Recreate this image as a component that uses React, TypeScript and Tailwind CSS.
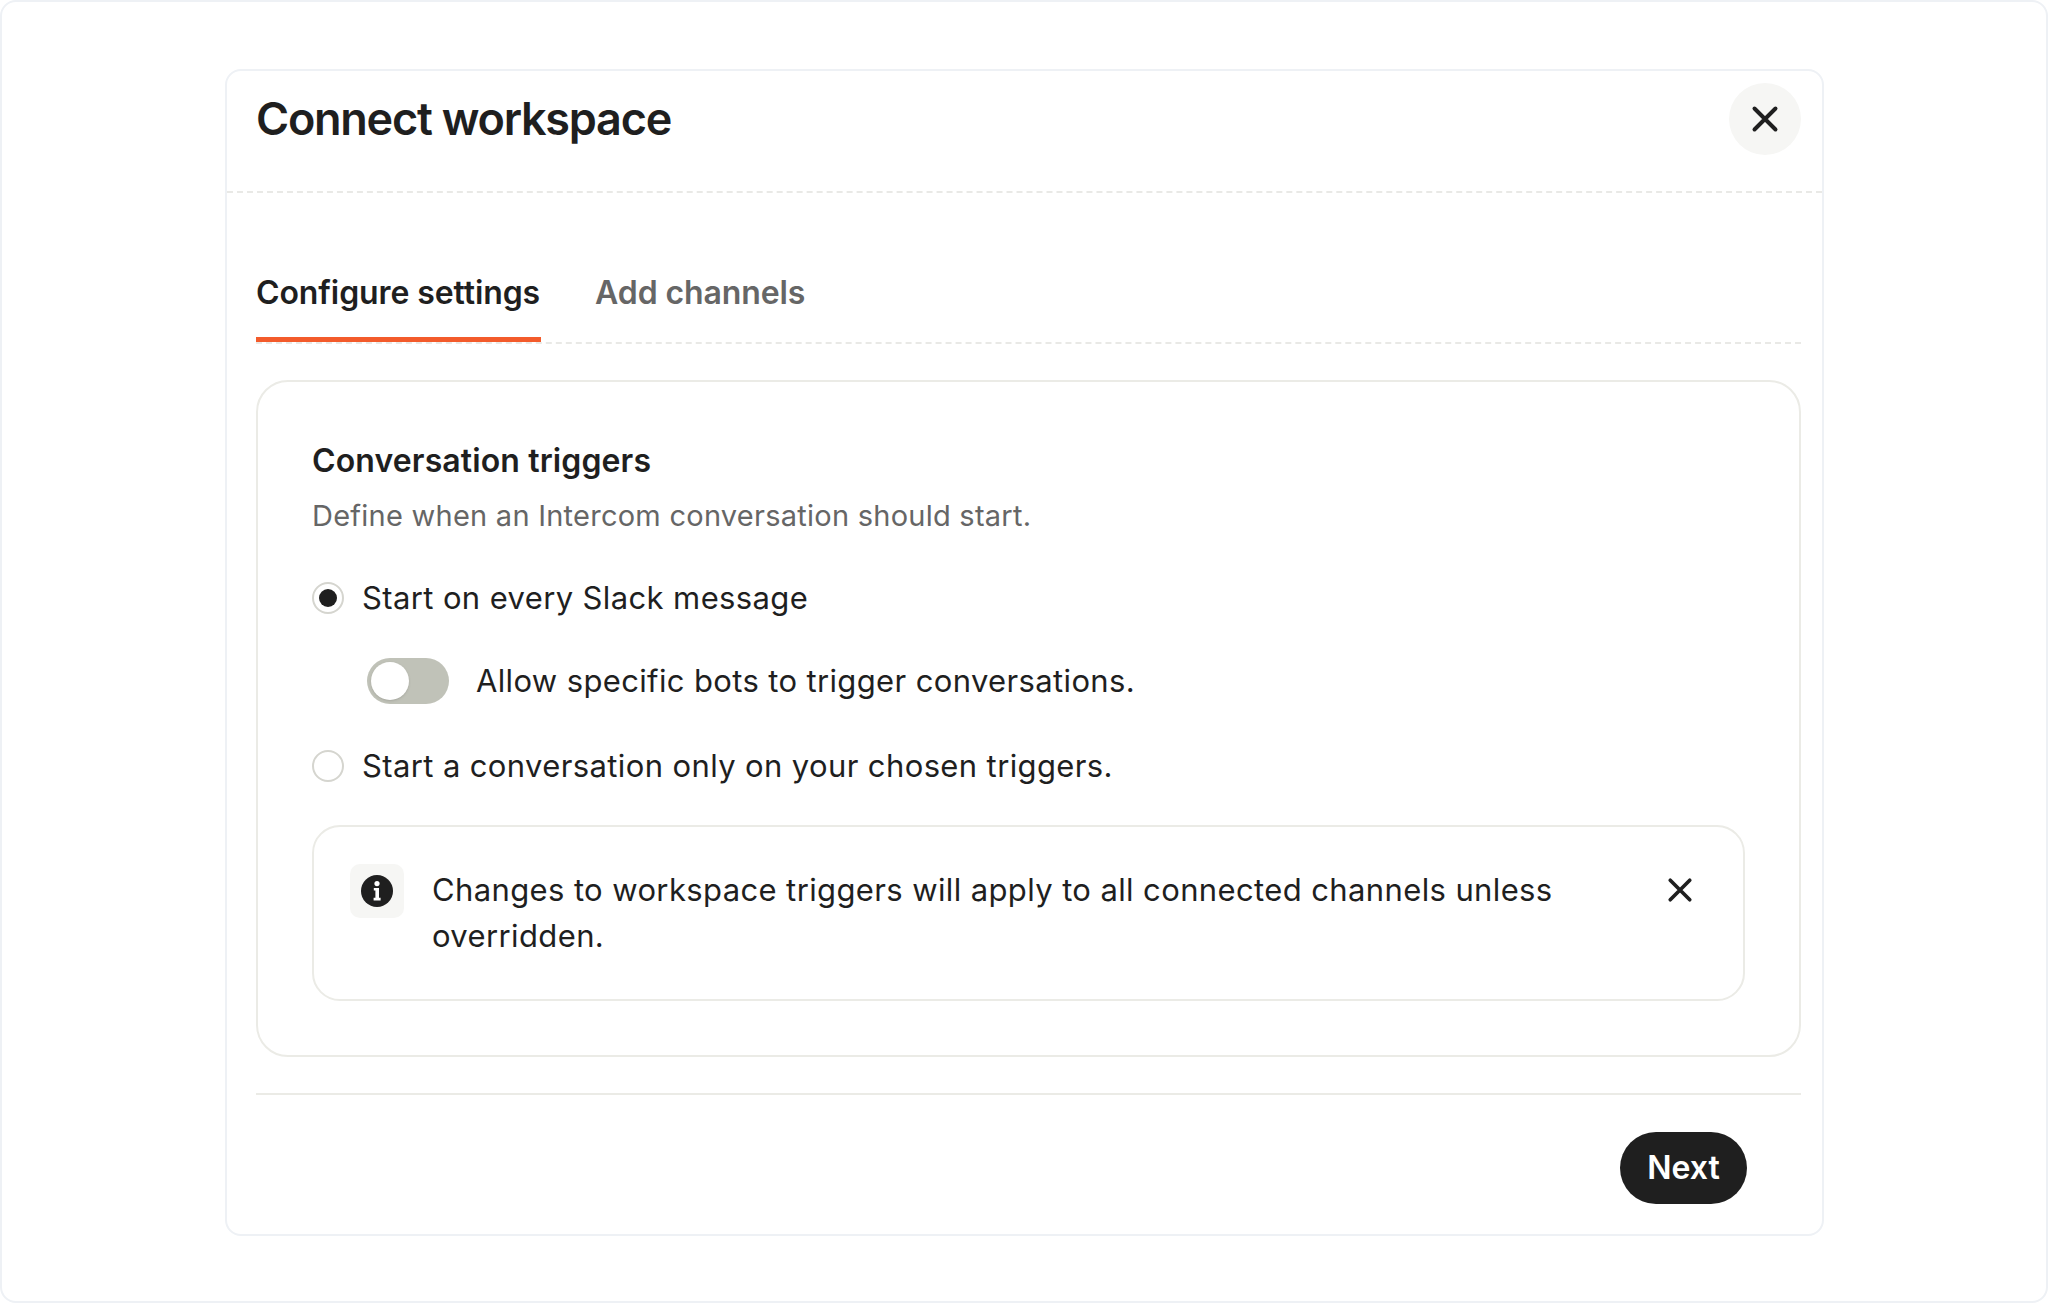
import React from "react";

function X({ size, stroke = 2.4 }: { size: number; stroke?: number }) {
  return (
    <svg width={size} height={size} viewBox="0 0 24 24" fill="none" stroke="#1f1f1f" strokeWidth={stroke} strokeLinecap="round">
      <path d="M3 3 21 21M21 3 3 21" />
    </svg>
  );
}

export default function App() {
  return (
    <div className="w-[2048px] h-[1303px] bg-white border-2 border-[#eef1f5] rounded-[16px] pt-[67px] pl-[223px] font-['Inter',sans-serif] text-[#1f1f1f] overflow-hidden">
      <div className="w-[1599px] h-[1167px] border-2 border-[#eef1f5] rounded-[16px] flex flex-col">
        <div className="h-[122px] shrink-0 border-b-2 border-dashed border-[#e9e9e6] pl-[29px] pr-[21px] pb-[24px] flex items-center justify-between">
          <h1 className="text-[45px] leading-[48px] font-semibold tracking-[-1.25px]">Connect workspace</h1>
          <button className="w-[72px] h-[72px] rounded-full bg-[#f6f6f4] flex items-center justify-center">
            <X size={28} stroke={3.4} />
          </button>
        </div>
        <div className="pl-[29px] pr-[21px] flex flex-col">
          <div className="mt-[59px] h-[92px] border-b-2 border-dashed border-[#e9e9e6] flex gap-[54px] text-[32px] font-semibold tracking-[-0.1px]">
            <div className="h-[92px] pr-[1px] border-b-[5px] border-[#f35b2b] leading-[86px] -mb-[2px] mt-[-2px]">Configure settings</div>
            <div className="leading-[86px] text-[#666666] mt-[-2px]">Add channels</div>
          </div>
          <div className="mt-[36px] h-[677px] border-2 border-[#ebebe6] rounded-[32px] px-[54px] pt-[57px]">
            <h2 className="text-[32px] leading-[44px] font-semibold tracking-[0.12px]">Conversation triggers</h2>
            <p className="mt-[13px] text-[29px] leading-[40px] tracking-[0.25px] text-[#666666]">Define when an Intercom conversation should start.</p>
            <label className="mt-[32px] h-[60px] flex items-center gap-[18px] text-[31px] tracking-[0.38px]">
              <span className="w-[32px] h-[32px] rounded-full border-2 border-[#d5d5cf] flex items-center justify-center">
                <span className="w-[18px] h-[18px] rounded-full bg-[#1f1f1f]" />
              </span>
              <span>Start on every Slack message</span>
            </label>
            <div className="mt-[23px] ml-[55px] h-[60px] flex items-center gap-[27px] text-[31px] tracking-[0.36px]">
              <span className="w-[82px] h-[46px] rounded-full bg-[#c0c2b8] flex items-center pl-[4px]">
                <span className="w-[38px] h-[38px] rounded-full bg-white shadow-sm" />
              </span>
              <span>Allow specific bots to trigger conversations.</span>
            </div>
            <label className="mt-[25px] h-[60px] flex items-center gap-[18px] text-[31px] tracking-[0.38px]">
              <span className="w-[32px] h-[32px] rounded-full border-2 border-[#d5d5cf]" />
              <span>Start a conversation only on your chosen triggers.</span>
            </label>
            <div className="mt-[29px] w-[1433px] h-[176px] border-2 border-[#ebebe6] rounded-[28px] pl-[36px] pt-[37px] flex items-start">
              <span className="w-[54px] h-[54px] shrink-0 rounded-[10px] bg-[#f6f6f4] flex items-center justify-center">
                <svg width="32" height="32" viewBox="0 0 32 32">
                  <circle cx="16" cy="16" r="16" fill="#1f1f1f" />
                  <circle cx="16" cy="8.6" r="2.6" fill="#fff" />
                  <path d="M12.8 13h5.2v9.8h1.6v2.6h-7v-2.6h1.8v-7.2h-1.6z" fill="#fff" />
                </svg>
              </span>
              <p className="ml-[28px] w-[1130px] text-[31px] tracking-[0.38px] leading-[46px] mt-[3px]">Changes to workspace triggers will apply to all connected channels unless overridden.</p>
              <span className="ml-[105px] mt-[13px]"><X size={26} stroke={3.4} /></span>
            </div>
          </div>
          <div className="mt-[36px] border-t-2 border-[#ebebe6] pt-[37px] pr-[54px] flex justify-end">
            <button className="w-[127px] h-[72px] rounded-full bg-[#1f1f1f] text-white text-[32px] font-semibold">Next</button>
          </div>
        </div>
      </div>
    </div>
  );
}
